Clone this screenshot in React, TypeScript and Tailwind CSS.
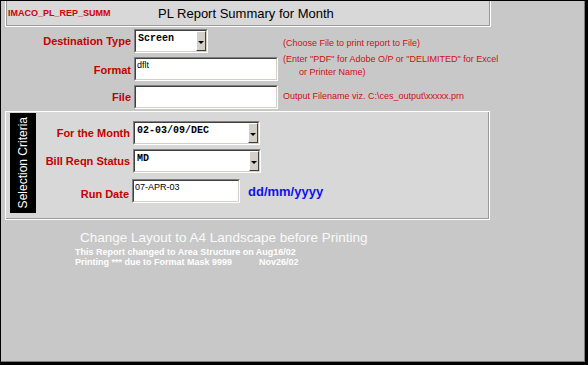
import React from "react";

function Arrow() {
    return (
        <div className="flex w-[10px] items-center justify-center border-t border-l border-t-white border-l-white border-b border-r border-b-[#404040] border-r-[#404040] bg-[#d4d0c8]">
            <div className="mt-[2px] h-0 w-0 border-l-[3px] border-r-[3px] border-t-[3px] border-l-transparent border-r-transparent border-t-black" />
        </div>
    );
}

function Combo({ value, className }: { value: string; className: string }) {
    return (
        <div className={"flex border-t border-l border-t-[#808080] border-l-[#808080] border-b border-r border-b-white border-r-white " + className}>
            <div className="flex flex-1 border-t border-l border-t-[#404040] border-l-[#404040] border-b border-r border-b-[#d4d0c8] border-r-[#d4d0c8] bg-white">
                <span className="flex-1 pl-[2px] pt-[2px] font-['Liberation_Mono',monospace] text-[10px] font-bold leading-[12px] text-black">
                    {value}
                </span>
                <Arrow />
            </div>
        </div>
    );
}

function Field({ value, className }: { value: string; className: string }) {
    return (
        <div className={"flex border-t border-l border-t-[#808080] border-l-[#808080] border-b border-r border-b-white border-r-white " + className}>
            <div className="flex-1 border-t border-l border-t-[#404040] border-l-[#404040] border-b border-r border-b-[#d4d0c8] border-r-[#d4d0c8] bg-white pl-[1px] pt-[1px] text-[9px] leading-[11px] text-black">
                {value}
            </div>
        </div>
    );
}

export default function App() {
    return (
        <div className="h-[365px] w-[588px] overflow-hidden bg-[#c8c8c8] font-['Liberation_Sans',Arial,sans-serif]">
            <div className="flex h-full w-full flex-col border-t border-l border-black border-r-[3px] border-b-[3px] shadow-[inset_-1px_-1px_0_#7c7c7c]">
                {/* title */}
                <div className="ml-[4px] flex h-[26px] w-[486px] items-center border-l border-r border-b border-white bg-[#d8d8d8] shadow-[inset_1px_0_0_#9a9a9a,inset_-1px_-1px_0_#9a9a9a]">
                    <span className="ml-[2px] w-[150px] text-[9px] font-bold text-[#d00000]">IMACO_PL_REP_SUMM</span>
                    <span className="text-[13px] text-black">PL Report Summary for Month</span>
                </div>

                {/* destination */}
                <div className="mt-[2px] flex h-[24px] items-center">
                    <span className="w-[130px] text-right text-[11px] font-bold text-[#c40000]">Destination Type</span>
                    <Combo value="Screen" className="ml-[3px] h-[24px] w-[74px]" />
                    <span className="ml-[75px] mt-[5px] text-[9px] text-[#cc1010]">(Choose File to print report to File)</span>
                </div>
                <div className="mt-[4px] flex h-[24px] items-center">
                    <span className="w-[130px] pt-[3px] text-right text-[11px] font-bold text-[#c40000]">Format</span>
                    <Field value="dflt" className="ml-[3px] h-[24px] w-[144px]" />
                    <div className="ml-[5px] -mt-[6px] flex flex-col text-[9px] leading-[13px] text-[#cc1010]">
                        <span>(Enter "PDF" for Adobe O/P or "DELIMITED" for Excel</span>
                        <span className="pl-[16px]">or Printer Name)</span>
                    </div>
                </div>
                <div className="mt-[4px] flex h-[24px] items-center">
                    <span className="w-[130px] text-right text-[11px] font-bold text-[#c40000]">File</span>
                    <Field value="" className="ml-[3px] h-[24px] w-[144px]" />
                    <span className="ml-[5px] text-[9px] text-[#cc1010]">Output Filename viz. C:\ces_output\xxxxx.prn</span>
                </div>

                {/* selection criteria */}
                <div className="mt-[2px] ml-[4px] flex h-[109px] w-[485px] border-r border-b border-white bg-[#d8d8d8] shadow-[inset_1px_1px_0_#ffffff,inset_-1px_-1px_0_#9a9a9a] pt-[2px] pl-[5px]">
                    <div className="flex h-[100px] w-[26px] items-center justify-center bg-black">
                        <span className="rotate-180 text-[12px] text-white [writing-mode:vertical-rl]">Selection Criteria</span>
                    </div>
                    <div className="flex flex-col">
                        <div className="mt-[8px] flex h-[24px] items-center">
                            <span className="w-[94px] text-right text-[11px] font-bold text-[#c40000]">For the Month</span>
                            <Combo value="02-03/09/DEC" className="ml-[3px] h-[24px] w-[127px]" />
                        </div>
                        <div className="mt-[4px] flex h-[24px] items-center">
                            <span className="w-[94px] text-right text-[11px] font-bold text-[#c40000]">Bill Reqn Status</span>
                            <Combo value="MD" className="ml-[3px] h-[24px] w-[128px]" />
                        </div>
                        <div className="mt-[6px] flex h-[24px] items-center">
                            <span className="w-[93px] pt-[6px] text-right text-[11px] font-bold text-[#c40000]">Run Date</span>
                            <Field value="07-APR-03" className="ml-[3px] h-[24px] w-[108px]" />
                            <span className="ml-[8px] pt-[2px] text-[13px] font-bold text-[#1010f0]">dd/mm/yyyy</span>
                        </div>
                    </div>
                </div>

                {/* notes */}
                <div className="mt-[10px] ml-[79px] text-[13.5px] leading-[15px] text-[#fafafa]">
                    Change Layout to A4 Landscape before Printing
                </div>
                <div className="mt-[2px] ml-[74px] flex flex-col text-[9px] font-bold leading-[10px] text-white">
                    <span>This Report changed to Area Structure on Aug16/02</span>
                    <span className="flex">
                        <span className="w-[184px]">Printing *** due to Format Mask 9999</span>
                        <span>Nov26/02</span>
                    </span>
                </div>
            </div>
        </div>
    );
}
